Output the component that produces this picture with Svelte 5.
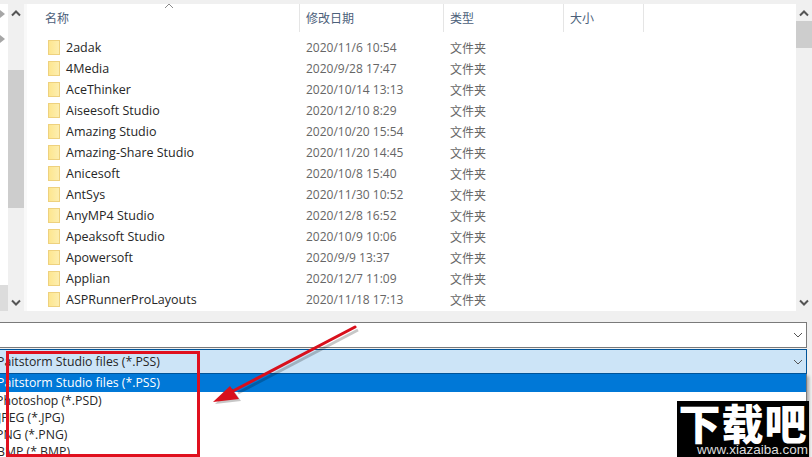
<script>
  const folders = [
    ['2adak', '2020/11/6 10:54'],
    ['4Media', '2020/9/28 17:47'],
    ['AceThinker', '2020/10/14 13:13'],
    ['Aiseesoft Studio', '2020/12/10 8:29'],
    ['Amazing Studio', '2020/10/20 15:54'],
    ['Amazing-Share Studio', '2020/11/20 14:45'],
    ['Anicesoft', '2020/10/8 15:40'],
    ['AntSys', '2020/11/30 10:52'],
    ['AnyMP4 Studio', '2020/12/8 16:52'],
    ['Apeaksoft Studio', '2020/10/9 10:06'],
    ['Apowersoft', '2020/9/9 13:37'],
    ['Applian', '2020/12/7 11:09'],
    ['ASPRunnerProLayouts', '2020/11/18 17:13']
  ];

  const fileTypes = [
    { label: 'Paitstorm Studio files (*.PSS)', indent: -3, selected: true },
    { label: 'Photoshop (*.PSD)', indent: -4 },
    { label: 'JPEG (*.JPG)', indent: -2 },
    { label: 'PNG (*.PNG)', indent: -4 },
    { label: 'BMP (*.BMP)', indent: -3 }
  ];
</script>

<div class="page">
  <div class="browser">
    <div class="tree-edge">
      <svg class="tree-arrow" width="6" height="10" viewBox="0 0 6 10"><path d="M0 1 L5 5 L0 9 Z" fill="#a6a6a6" /></svg>
      <svg class="tree-arrow" width="6" height="10" viewBox="0 0 6 10"><path d="M0 1 L5 5 L0 9 Z" fill="#a6a6a6" /></svg>
      <div class="tree-bar"></div>
    </div>

    <div class="scrollbar left-bar">
      <svg class="chev" width="10" height="7" viewBox="0 0 10 7"><path d="M1 5.5 L5 1.5 L9 5.5" /></svg>
      <div class="thumb left-thumb"></div>
      <svg class="chev down" width="10" height="7" viewBox="0 0 10 7"><path d="M1 1.5 L5 5.5 L9 1.5" /></svg>
    </div>

    <div class="listing">
      <svg class="sort-mark" width="10" height="6" viewBox="0 0 10 6"><path d="M1 5 L5 1 L9 5" /></svg>
      <div class="head">
        <div class="col name">名称</div>
        <div class="col date">修改日期</div>
        <div class="col type">类型</div>
        <div class="col size">大小</div>
      </div>
      <div class="rows">
        {#each folders as folder}
          <div class="row">
            <div class="cell name">
              <span class="folder"></span>
              <span class="folder-name">{folder[0]}</span>
            </div>
            <div class="cell date">{folder[1]}</div>
            <div class="cell type">文件夹</div>
          </div>
        {/each}
      </div>
    </div>

    <div class="scrollbar right-bar">
      <svg class="chev" width="10" height="7" viewBox="0 0 10 7"><path d="M1 5.5 L5 1.5 L9 5.5" /></svg>
      <div class="thumb right-thumb"></div>
      <svg class="chev down" width="10" height="7" viewBox="0 0 10 7"><path d="M1 1.5 L5 5.5 L9 1.5" /></svg>
    </div>
  </div>

  <div class="name-box">
    <svg class="combo-chev" width="10" height="6" viewBox="0 0 10 6"><path d="M1 1 L5 5 L9 1" /></svg>
  </div>

  <div class="type-box">
    <span class="type-value">Paitstorm Studio files (*.PSS)</span>
    <svg class="combo-chev" width="10" height="6" viewBox="0 0 10 6"><path d="M1 1 L5 5 L9 1" /></svg>
  </div>

  <div class="dropdown">
    {#each fileTypes as item}
      <div class="option" class:selected={item.selected}>
        <span style="margin-left: {item.indent}px">{item.label}</span>
      </div>
    {/each}
  </div>

  <!-- annotation drawn over the dialog -->
  <div class="red-box"></div>
  <svg class="arrow" width="812" height="457" viewBox="0 0 812 457">
    <path d="M356 328 L236 391" stroke="#000" stroke-opacity="0.22" stroke-width="3" transform="translate(2 2)" />
    <path d="M213 402 L230 386 L239 399 Z" fill="#000" fill-opacity="0.22" transform="translate(2 2)" />
    <path d="M355 327 L233 391" stroke="#d8101c" stroke-width="3" stroke-linecap="round" />
    <path d="M213 402 L230 386 L234 392 L239 399 Z" fill="#d8101c" />
  </svg>

  <div class="logo">
    <div class="logo-title">下载吧</div>
    <div class="logo-url">www.xiazaiba.com</div>
  </div>
</div>

<style>
  :global(body) {
    margin: 0;
    background: #f0f0f0;
  }
  .page {
    position: relative;
    width: 812px;
    height: 457px;
    overflow: hidden;
    background: #f0f0f0;
    font-family: "Open Sans", "Noto Sans CJK SC", sans-serif;
    font-size: 12px;
    color: #262626;
  }
  .browser {
    display: flex;
    height: 311px;
    padding-top: 4px;
    box-sizing: border-box;
  }
  .tree-edge {
    width: 8px;
    background: #fff;
    display: flex;
    flex-direction: column;
    padding-top: 5px;
    box-sizing: border-box;
  }
  .tree-arrow {
    display: block;
    margin-bottom: 15px;
  }
  .tree-bar {
    margin-top: auto;
    height: 26px;
    background: #dcdcdc;
  }
  .scrollbar {
    width: 16px;
    display: flex;
    flex-direction: column;
    align-items: center;
    padding: 6px 0 5px;
    box-sizing: border-box;
    background: #f0f0f0;
  }
  .left-bar {
    width: 19px;
    border-right: 3px solid #f9f9f9;
  }
  .chev {
    flex: none;
  }
  .chev.down {
    margin-top: auto;
  }
  .chev path {
    fill: none;
    stroke: #555;
    stroke-width: 2;
  }
  .thumb {
    flex: none;
    width: 100%;
    background: #cdcdcd;
  }
  .left-thumb {
    height: 138px;
    margin-top: 53px;
  }
  .right-thumb {
    height: 27px;
    margin-top: 4px;
  }
  .listing {
    position: relative;
    flex: 1;
    background: #fff;
    min-width: 0;
  }
  .sort-mark {
    position: absolute;
    left: 137px;
    top: -1px;
  }
  .sort-mark path {
    fill: none;
    stroke: #8a8a8a;
    stroke-width: 1;
  }
  .head {
    display: flex;
    height: 28px;
    color: #4c607a;
  }
  .col {
    padding: 5px 0 0 6px;
    border-right: 1px solid #e5e5e5;
    box-sizing: border-box;
  }
  .name {
    width: 273px;
  }
  .date {
    width: 144px;
  }
  .type {
    width: 120px;
  }
  .size {
    width: 80px;
  }
  .col.name {
    padding-left: 18px;
  }
  .rows {
    padding-top: 5px;
  }
  .row {
    display: flex;
    height: 21px;
    align-items: center;
  }
  .cell.date,
  .cell.type {
    padding-left: 6px;
    box-sizing: border-box;
    color: #666;
  }
  .cell.name {
    display: flex;
    align-items: center;
    padding-left: 21px;
    box-sizing: border-box;
  }
  .folder {
    width: 12px;
    height: 15px;
    margin-right: 6px;
    box-sizing: border-box;
    border: 1px solid #eed17e;
    background: linear-gradient(90deg, #fde68f, #fdeeb0);
  }
  .folder-name {
    font-size: 12.5px;
  }
  .name-box {
    position: relative;
    height: 26px;
    margin-top: 11px;
    background: #fff;
    border-top: 1px solid #7a7a7a;
    border-bottom: 1px solid #7a7a7a;
    border-right: 1px solid #7a7a7a;
    box-sizing: border-box;
    width: 807px;
  }
  .type-box {
    position: relative;
    height: 25px;
    margin-top: 1px;
    width: 807px;
    box-sizing: border-box;
    background: #cce4f7;
    border: 1px solid #005499;
    border-left: 0;
    display: flex;
    align-items: center;
    font-size: 12.27px;
  }
  .type-value {
    margin-left: -3px;
  }
  .combo-chev {
    position: absolute;
    right: 3px;
    top: 9px;
  }
  .combo-chev path {
    fill: none;
    stroke: #555;
    stroke-width: 1;
  }
  .dropdown {
    width: 807px;
    background: #fff;
    border-right: 1px solid #7a7a7a;
    box-sizing: border-box;
    height: 90px;
    font-size: 12.27px;
    box-shadow: 2px 2px 3px rgba(0, 0, 0, 0.3);
  }
  .option {
    height: 17px;
    line-height: 17px;
  }
  .option.selected {
    height: 18px;
    line-height: 18px;
    background: #0078d7;
    color: #fff;
  }
  .red-box {
    position: absolute;
    left: 6px;
    top: 351px;
    width: 194px;
    height: 106px;
    border: 3px solid #e0101e;
    box-sizing: border-box;
  }
  .arrow {
    position: absolute;
    left: 0;
    top: 0;
    pointer-events: none;
  }
  .logo {
    position: absolute;
    left: 677px;
    top: 401px;
    width: 132px;
    height: 56px;
    background: #000;
    color: #fff;
    text-align: center;
    overflow: hidden;
  }
  .logo-title {
    font-family: "Noto Sans CJK SC", sans-serif;
    font-weight: 900;
    font-size: 42px;
    line-height: 42px;
    letter-spacing: 1px;
  }
  .logo-url {
    font-family: "Liberation Sans", sans-serif;
    font-size: 13.5px;
    line-height: 14px;
    color: #ddd;
    text-align: right;
    padding-right: 1px;
  }
</style>
